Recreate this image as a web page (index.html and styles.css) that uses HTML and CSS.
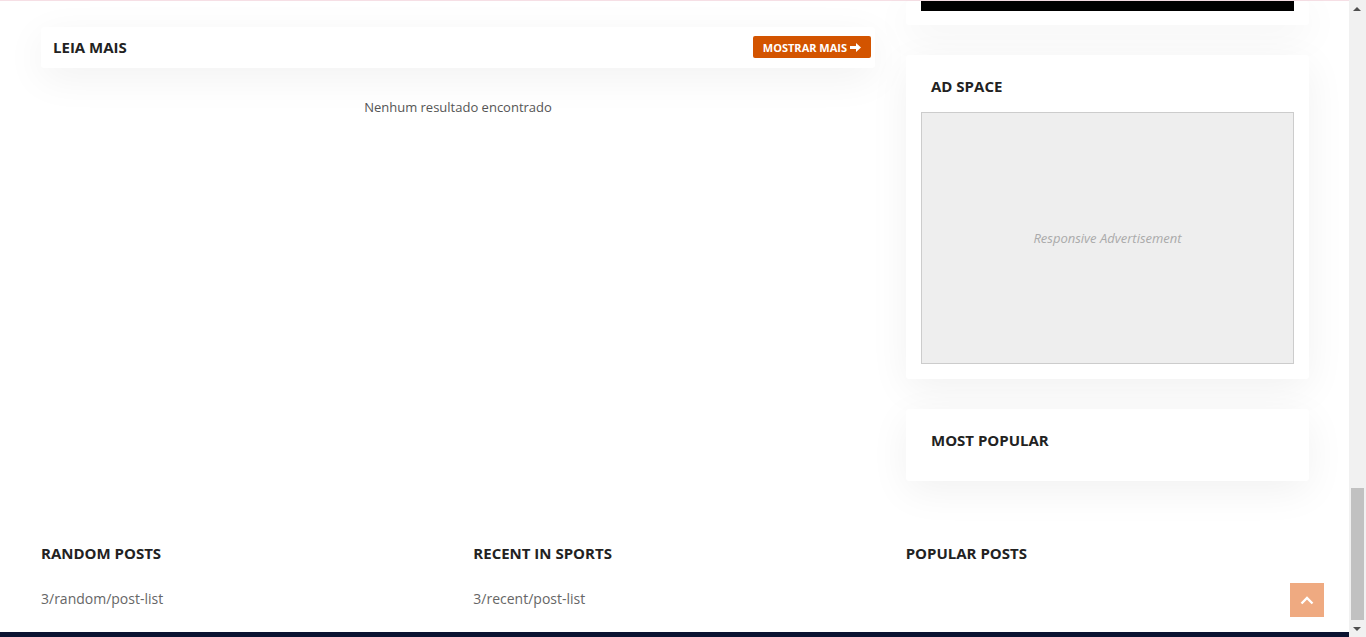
FILE: index.html
```html
<!DOCTYPE html>
<html lang="pt">
<head>
  <meta charset="UTF-8">
  <meta name="viewport" content="width=device-width, initial-scale=1.0">
  <title>Leia mais</title>
  <link rel="stylesheet" href="styles.css">
</head>
<body>
  <div class="page">
    <div class="container">
      <main class="main">
        <div class="box title-bar">
          <h3 class="title">LEIA MAIS</h3>
          <a class="more" href="#">MOSTRAR MAIS
            <svg width="11" height="9" viewBox="0 0 11 9"><path d="M0 3h6V0l5 4.5L6 9V6H0z" fill="#fff"/></svg>
          </a>
        </div>
        <p class="empty">Nenhum resultado encontrado</p>
      </main>

      <aside class="sidebar">
        <div class="box widget widget-top">
          <div class="black-bar"></div>
        </div>
        <div class="box widget">
          <h3 class="title">AD SPACE</h3>
          <div class="ad">Responsive Advertisement</div>
        </div>
        <div class="box widget widget-popular">
          <h3 class="title">MOST POPULAR</h3>
        </div>
      </aside>
    </div>

    <footer class="footer">
      <div class="col">
        <h3 class="title">RANDOM POSTS</h3>
        <p class="link">3/random/post-list</p>
      </div>
      <div class="col">
        <h3 class="title">RECENT IN SPORTS</h3>
        <p class="link">3/recent/post-list</p>
      </div>
      <div class="col">
        <h3 class="title">POPULAR POSTS</h3>
      </div>
    </footer>
    <div class="bottom-bar"></div>
  </div>

  <!-- voltar ao topo -->
  <a class="to-top" href="#">
    <svg width="16" height="10" viewBox="0 0 16 10"><path d="M2.5 8.5L8 3l5.5 5.5" fill="none" stroke="#fff" stroke-width="2.4"/></svg>
  </a>

  <!-- barra de rolagem -->
  <div class="scrollbar">
    <span class="arrow up"></span>
    <div class="thumb"></div>
    <span class="arrow down"></span>
  </div>
</body>
</html>
```

FILE: styles.css
```css
html, body {
  margin: 0;
  padding: 0;
  height: 100%;
  overflow: hidden;
}

body {
  background: #fff;
  font-family: "Open Sans", "Noto Sans", sans-serif;
  color: #222;
}

.page {
  width: 1349px;
  border-top: 1px solid #f6dfe5;
}

.container {
  display: flex;
  gap: 31px;
  padding: 0 40px 0 41px;
}

.box {
  background: #fff;
  border-radius: 3px;
  box-shadow: 0 10px 40px rgba(0, 0, 0, .06);
}

.title {
  margin: 0;
  font-size: 15px;
  font-weight: 700;
  line-height: 20px;
  color: #222;
}

/* coluna principal */
.main {
  width: 834px;
  flex-shrink: 0;
}

.title-bar {
  margin-top: 26px;
  height: 41px;
  display: flex;
  align-items: center;
  justify-content: space-between;
  padding: 0 4px 1px 12px;
  box-sizing: border-box;
}

.more {
  display: flex;
  align-items: center;
  gap: 3px;
  height: 22px;
  padding: 0 10px;
  background: #d35400;
  color: #fff;
  font-size: 11px;
  font-weight: 700;
  text-decoration: none;
  border-radius: 2px;
}

.empty {
  margin: 30px 0 0;
  text-align: center;
  font-size: 13px;
  color: #555;
}

/* barra lateral */
.sidebar {
  width: 403px;
  flex-shrink: 0;
  display: flex;
  flex-direction: column;
  gap: 30px;
}

.widget {
  padding: 21px 15px 15px;
}

.widget .title {
  padding: 0 10px;
  margin-bottom: 16px;
}

.widget-top {
  padding-top: 0;
  padding-bottom: 14px;
}

.black-bar {
  height: 10px;
  background: #000;
}

.ad {
  height: 250px;
  background: #eee;
  border: 1px solid #ccc;
  display: flex;
  align-items: center;
  justify-content: center;
  font-size: 13px;
  font-style: italic;
  color: #aaa;
}

.widget-popular {
  padding-bottom: 31px;
}

.widget-popular .title {
  margin-bottom: 0;
}

/* rodapé */
.footer {
  display: flex;
  gap: 30px;
  padding: 62px 41px 0;
}

.col {
  flex: 1;
  height: 89px;
}

.link {
  margin: 26px 0 0;
  font-size: 14px;
  color: #666;
}

.bottom-bar {
  height: 10px;
  background: #0b1331;
}

.to-top {
  position: fixed;
  left: 1290px;
  top: 583px;
  width: 34px;
  height: 34px;
  background: #efaa81;
  display: flex;
  align-items: center;
  justify-content: center;
}

.scrollbar {
  position: fixed;
  top: 0;
  right: 0;
  width: 17px;
  height: 100%;
  background: #f1f1f1;
}

.thumb {
  position: absolute;
  left: 2px;
  right: 2px;
  top: 488px;
  height: 132px;
  background: #c1c1c1;
}

.arrow {
  position: absolute;
  left: 4px;
  width: 0;
  height: 0;
  border-left: 4px solid transparent;
  border-right: 4px solid transparent;
}

.arrow.up {
  top: 7px;
  border-bottom: 4px solid #505050;
}

.arrow.down {
  bottom: 6px;
  border-top: 4px solid #505050;
}
```
